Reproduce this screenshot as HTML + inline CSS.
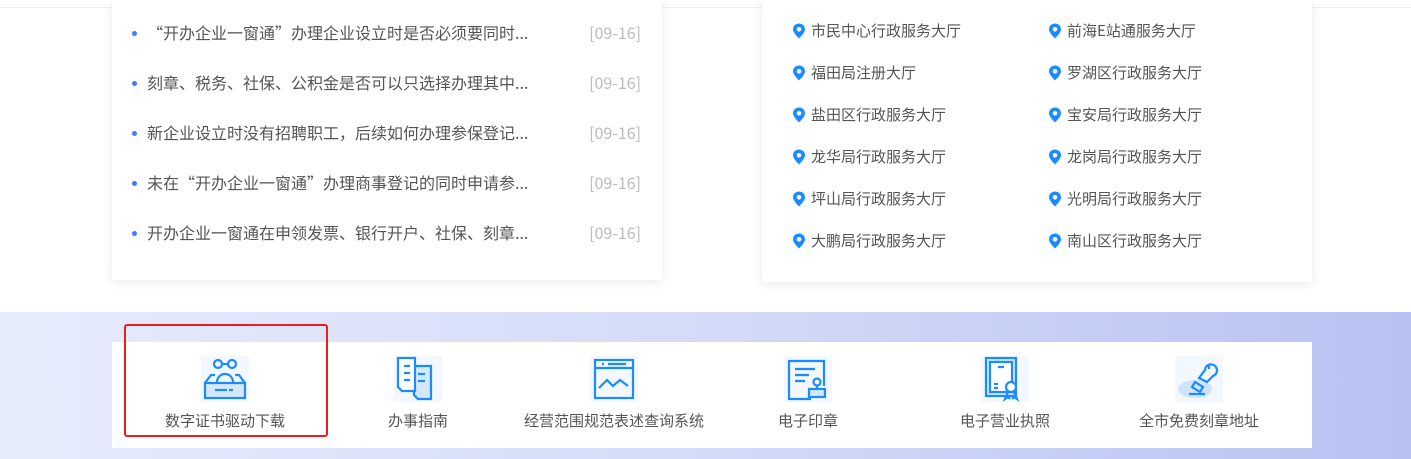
<!DOCTYPE html>
<html><head><meta charset="utf-8"><style>
*{margin:0;padding:0;box-sizing:border-box}
body{width:1411px;height:459px;overflow:hidden;background:#fff;font-family:"Noto Sans CJK SC","Liberation Sans",sans-serif;position:relative}
.top{position:absolute;left:0;top:0;width:1411px;height:8px;border-bottom:1px solid #eee}
.card{position:absolute;background:#fff;box-shadow:0 2px 10px rgba(0,0,0,.09)}
.news{position:absolute;left:0;width:550px;font-size:16px;color:#555;height:22px;line-height:22px}
.news .d{position:absolute;left:20px;top:10px;width:5px;height:5px;border-radius:50%;background:#3d7bf7}
.news .t{position:absolute;left:35px}
.news .dt{position:absolute;right:21px;color:#bbb}
.loc{position:absolute;font-size:15px;color:#555;height:22px;line-height:22px}
.loc svg{position:absolute;left:-19px;top:3px}
.band{position:absolute;left:0;top:312px;width:1411px;height:147px;background:linear-gradient(90deg,#e7ecfc,#d3dbf8 50%,#b8c2f2)}
.panel{position:absolute;left:112px;top:342px;width:1200px;height:106px;background:#fff}
.it{position:absolute;top:0;width:200px;text-align:center}
.it .ic{position:absolute;top:14px;left:50%;margin-left:-24px;width:48px;height:46px;background:#f3f8ff}
.it .lb{position:absolute;top:68px;width:100%;font-size:15px;color:#555;line-height:22px}
.red{position:absolute;left:124px;top:324px;width:204px;height:113px;border:2px solid #f01c1c;border-radius:3px}
</style></head><body>
<div class="top"></div>
<div class="card" style="left:112px;top:0;width:550px;height:280px">
<div class="news" style="top:21px"><span class="d"></span><span class="t">“开办企业一窗通”办理企业设立时是否必须要同时...</span><span class="dt">[09-16]</span></div>
<div class="news" style="top:71px"><span class="d"></span><span class="t">刻章、税务、社保、公积金是否可以只选择办理其中...</span><span class="dt">[09-16]</span></div>
<div class="news" style="top:121px"><span class="d"></span><span class="t">新企业设立时没有招聘职工，后续如何办理参保登记...</span><span class="dt">[09-16]</span></div>
<div class="news" style="top:171px"><span class="d"></span><span class="t">未在“开办企业一窗通”办理商事登记的同时申请参...</span><span class="dt">[09-16]</span></div>
<div class="news" style="top:221px"><span class="d"></span><span class="t">开办企业一窗通在申领发票、银行开户、社保、刻章...</span><span class="dt">[09-16]</span></div>
</div>
<div class="card" style="left:762px;top:0;width:550px;height:282px">
<svg width="0" height="0" style="position:absolute"><defs><symbol id="pin" viewBox="0 0 14 16"><path d="M7 0.5C3.6 0.5 1 3 1 6.3 1 10 7 15.5 7 15.5S13 10 13 6.3C13 3 10.4 0.5 7 0.5Z" fill="#1a8cff"/><circle cx="7" cy="6.3" r="2.3" fill="#fff"/></symbol></defs></svg>
<div class="loc" style="left:49px;top:20px"><svg width="14" height="16"><use href="#pin"/></svg>市民中心行政服务大厅</div>
<div class="loc" style="left:305px;top:20px"><svg width="14" height="16"><use href="#pin"/></svg>前海E站通服务大厅</div>
<div class="loc" style="left:49px;top:62px"><svg width="14" height="16"><use href="#pin"/></svg>福田局注册大厅</div>
<div class="loc" style="left:305px;top:62px"><svg width="14" height="16"><use href="#pin"/></svg>罗湖区行政服务大厅</div>
<div class="loc" style="left:49px;top:104px"><svg width="14" height="16"><use href="#pin"/></svg>盐田区行政服务大厅</div>
<div class="loc" style="left:305px;top:104px"><svg width="14" height="16"><use href="#pin"/></svg>宝安局行政服务大厅</div>
<div class="loc" style="left:49px;top:146px"><svg width="14" height="16"><use href="#pin"/></svg>龙华局行政服务大厅</div>
<div class="loc" style="left:305px;top:146px"><svg width="14" height="16"><use href="#pin"/></svg>龙岗局行政服务大厅</div>
<div class="loc" style="left:49px;top:188px"><svg width="14" height="16"><use href="#pin"/></svg>坪山局行政服务大厅</div>
<div class="loc" style="left:305px;top:188px"><svg width="14" height="16"><use href="#pin"/></svg>光明局行政服务大厅</div>
<div class="loc" style="left:49px;top:230px"><svg width="14" height="16"><use href="#pin"/></svg>大鹏局行政服务大厅</div>
<div class="loc" style="left:305px;top:230px"><svg width="14" height="16"><use href="#pin"/></svg>南山区行政服务大厅</div>
</div>
<div class="band"></div>
<div class="panel">
<div class="it" style="left:13px"><div class="ic"><svg width="48" height="46" viewBox="0 0 48 46" fill="none" stroke="#1a8cff" stroke-width="2.2"><circle cx="17" cy="8" r="4"/><circle cx="31" cy="8" r="4"/><path d="M21 8h6"/><path d="M16 26a8 8 0 0 1 16 0"/><path d="M4 27l6-8h4M44 27l-6-8h-4"/><rect x="4" y="27" width="40" height="15" fill="#d6e8ff"/><path d="M14 34h12M28 34h4"/></svg></div><div class="lb">数字证书驱动下载</div></div>
<div class="it" style="left:206px"><div class="ic"><svg width="48" height="46" viewBox="0 0 48 46" fill="none" stroke="#1a8cff" stroke-width="2.2"><path d="M20 10h17v33H24l-4-4z" fill="#d6e8ff"/><path d="M4 2h17v33H8l-4-4z" fill="#fff"/><path d="M10 10h6M10 17h6M10 24h6M24 18h7M24 25h7"/></svg></div><div class="lb">办事指南</div></div>
<div class="it" style="left:402px"><div class="ic"><svg width="48" height="46" viewBox="0 0 48 46" fill="none" stroke="#1a8cff" stroke-width="2.2"><rect x="5" y="4" width="38" height="38"/><path d="M5 12h38M12 8h2M18 8h18M9 32l8-8 6 6 7-6 8 6"/></svg></div><div class="lb">经营范围规范表述查询系统</div></div>
<div class="it" style="left:596px"><div class="ic"><svg width="48" height="46" viewBox="0 0 48 46" fill="none" stroke="#1a8cff" stroke-width="2.2"><path d="M40 30V5H5v38h22"/><path d="M11 13h20M11 19h14M11 25h10"/><circle cx="33" cy="26" r="3.5"/><path d="M33 30v3"/><rect x="25" y="33" width="16" height="8" fill="#d6e8ff"/></svg></div><div class="lb">电子印章</div></div>
<div class="it" style="left:793px"><div class="ic"><svg width="48" height="46" viewBox="0 0 48 46" fill="none" stroke="#1a8cff" stroke-width="2.2"><rect x="5" y="2" width="30" height="38" fill="#d6e8ff"/><rect x="9" y="6" width="22" height="30" fill="#fff"/><path d="M17 11h6M13 28h4M13 32h4"/><circle cx="30" cy="31" r="5" fill="#fff"/><path d="M27 36l-3 7 3-2 2 2M33 36l3 7-3-2-2 2"/></svg></div><div class="lb">电子营业执照</div></div>
<div class="it" style="left:987px"><div class="ic"><svg width="48" height="46" viewBox="0 0 48 46" fill="none" stroke="#1a8cff" stroke-width="2.2"><ellipse cx="20" cy="33" rx="17" ry="9" fill="#cfe3ff" stroke="none"/><path d="M14 38h16"/><path d="M30 14a6 6 0 1 1 8 6l-6 6-8-4z"/><path d="M20 26l8 5-3 5-8-5z"/><path d="M34 10v3"/></svg></div><div class="lb">全市免费刻章地址</div></div>
</div>
<div class="red"></div>
</body></html>
